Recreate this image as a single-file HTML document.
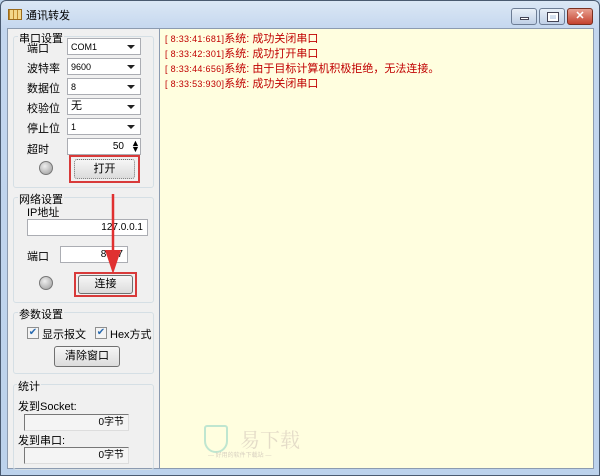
<!DOCTYPE html>
<html><head><meta charset="utf-8"><style>
*{margin:0;padding:0;box-sizing:border-box}
body{width:600px;height:476px;overflow:hidden;background:#bcd3ec;font-family:"Liberation Sans","Noto Sans CJK SC",sans-serif;font-size:11px;color:#000;position:relative}
.a{position:absolute}
.frame{left:0;top:0;width:600px;height:476px;background:linear-gradient(#dbe7f5,#c3d6ee 30px,#bcd2ec);border:1px solid #4a5a70;border-radius:6px 6px 0 0}
.client{left:7px;top:28px;width:587px;height:441px;background:#f0f0f0;border:1px solid #8c9bb0}
.log{left:159px;top:28px;width:435px;height:441px;background:#fffedf;border:1px solid #8c9bb0}
.grp{position:absolute;border:1px solid #d5dfe5;border-radius:3px}
.gl{position:absolute;background:#f0f0f0;padding:0 1px;font-size:11px}
.lab{position:absolute;font-size:11px}
.cb{position:absolute;height:17px;background:#fff;border:1px solid #abadb3;font-size:9px;padding:2px 3px;line-height:12px}
.cb:after{content:"";position:absolute;right:5px;top:6px;border:4px solid transparent;border-top:4px solid #222}
.in{position:absolute;height:17px;background:#fff;border:1px solid #abadb3;font-size:10px;text-align:right;padding:2px 4px;line-height:12px}
.btn{position:absolute;background:linear-gradient(#f6f6f6,#dcdcdc);border:1px solid #707070;border-radius:3px;text-align:center;font-size:11px}
.red{position:absolute;border:2px solid #d83a3a}
.dot{position:absolute;width:14px;height:14px;border-radius:50%;background:radial-gradient(circle at 40% 35%,#eee,#999);border:1px solid #777}
.chk{position:absolute;width:12px;height:12px;border:1px solid #8e8f8f;background:#f4f4f4;font-size:10px;line-height:10px;color:#2a6bb0;text-align:center}
.log p{color:#c00000;font-size:11px;line-height:15px;white-space:nowrap}
.log p span{font-size:9px;letter-spacing:0.3px}
.wb{position:absolute;top:8px;height:17px;border:1px solid #6d7d95;border-radius:3px;background:linear-gradient(#e9f0f8,#c0d0e6)}
</style></head><body>
<div class="a frame"></div>
<div class="a" style="left:8px;top:9px;width:14px;height:11px;background:repeating-linear-gradient(90deg,#c08a2c 0 1px,#f3d78a 1px 4px),#f3d78a;border:1px solid #9a6a1c"></div>
<div class="a" style="left:26px;top:7px;font-size:11px">通讯转发</div>
<div class="wb" style="left:511px;width:26px"><div class="a" style="left:8px;top:8px;width:9px;height:3px;background:#fff;border:1px solid #445"></div></div>
<div class="wb" style="left:539px;width:26px"><div class="a" style="left:8px;top:4px;width:10px;height:8px;border:2px solid #fff;outline:1px solid #445"></div></div>
<div class="wb" style="left:567px;width:26px;background:linear-gradient(#e8a090,#c4422e);border-color:#7a3020;color:#fff;font-weight:bold;text-align:center;font-size:11px;line-height:15px">✕</div>
<div class="a client"></div>

<div class="grp" style="left:13px;top:36px;width:141px;height:152px"></div>
<div class="gl" style="left:18px;top:30px">串口设置</div>
<div class="lab" style="left:27px;top:40px">端口</div>
<div class="cb" style="left:67px;top:38px;width:74px">COM1</div>
<div class="lab" style="left:27px;top:60px">波特率</div>
<div class="cb" style="left:67px;top:58px;width:74px">9600</div>
<div class="lab" style="left:27px;top:80px">数据位</div>
<div class="cb" style="left:67px;top:78px;width:74px">8</div>
<div class="lab" style="left:27px;top:100px">校验位</div>
<div class="cb" style="left:67px;top:98px;width:74px;font-size:11px;line-height:11px">无</div>
<div class="lab" style="left:27px;top:120px">停止位</div>
<div class="cb" style="left:67px;top:118px;width:74px">1</div>
<div class="lab" style="left:27px;top:141px">超时</div>
<div class="in" style="left:67px;top:138px;width:74px;padding-right:16px">50</div>
<div class="a" style="left:131px;top:140px;font-size:9px;line-height:6px">▲<br>▼</div>
<div class="dot" style="left:39px;top:161px"></div>
<div class="red" style="left:69px;top:155px;width:71px;height:28px"></div>
<div class="btn" style="left:74px;top:159px;width:61px;height:20px;line-height:18px;border-style:dotted">打开</div>

<div class="grp" style="left:13px;top:197px;width:141px;height:106px"></div>
<div class="gl" style="left:18px;top:191px">网络设置</div>
<div class="lab" style="left:27px;top:204px">IP地址</div>
<div class="in" style="left:27px;top:219px;width:121px">127.0.0.1</div>
<div class="lab" style="left:27px;top:248px">端口</div>
<div class="in" style="left:60px;top:246px;width:68px">8087</div>
<div class="dot" style="left:39px;top:276px"></div>
<div class="red" style="left:74px;top:272px;width:63px;height:25px"></div>
<div class="btn" style="left:78px;top:275px;width:55px;height:19px;line-height:17px">连接</div>
<svg class="a" style="left:100px;top:190px" width="26" height="90"><line x1="13" y1="4" x2="13" y2="66" stroke="#e03030" stroke-width="2.5"/><polygon points="5,60 21,60 13,84" fill="#e03030"/></svg>

<div class="grp" style="left:13px;top:312px;width:141px;height:62px"></div>
<div class="gl" style="left:18px;top:306px">参数设置</div>
<div class="chk" style="left:27px;top:327px">✔</div>
<div class="lab" style="left:42px;top:326px">显示报文</div>
<div class="chk" style="left:95px;top:327px">✔</div>
<div class="lab" style="left:110px;top:326px">Hex方式</div>
<div class="btn" style="left:54px;top:346px;width:66px;height:21px;line-height:19px">清除窗口</div>

<div class="grp" style="left:13px;top:384px;width:141px;height:86px"></div>
<div class="gl" style="left:17px;top:378px">统计</div>
<div class="lab" style="left:18px;top:398px">发到Socket:</div>
<div class="in" style="left:24px;top:414px;width:105px;background:#f4f4f4;border-color:#777 #ddd #ddd #777">0字节</div>
<div class="lab" style="left:18px;top:432px">发到串口:</div>
<div class="in" style="left:24px;top:447px;width:105px;background:#f4f4f4;border-color:#777 #ddd #ddd #777">0字节</div>

<div class="a log">
<div style="padding:3px 0 0 5px">
<p><span>[ 8:33:41:681]</span>系统: 成功关闭串口</p>
<p><span>[ 8:33:42:301]</span>系统: 成功打开串口</p>
<p><span>[ 8:33:44:656]</span>系统: 由于目标计算机积极拒绝，无法连接。</p>
<p><span>[ 8:33:53:930]</span>系统: 成功关闭串口</p>
</div>
</div>
<div class="a" style="left:204px;top:425px;width:24px;height:28px;border:2px solid #bfe6d0;border-radius:3px 3px 12px 12px"></div>
<div class="a" style="left:240px;top:424px;font-size:20px;color:#e4dcc8;font-family:'Noto Serif CJK SC',serif">易下载</div>
<div class="a" style="left:208px;top:450px;font-size:6px;color:#d8d0c0">— 好用的软件下载站 —</div>
</body></html>
